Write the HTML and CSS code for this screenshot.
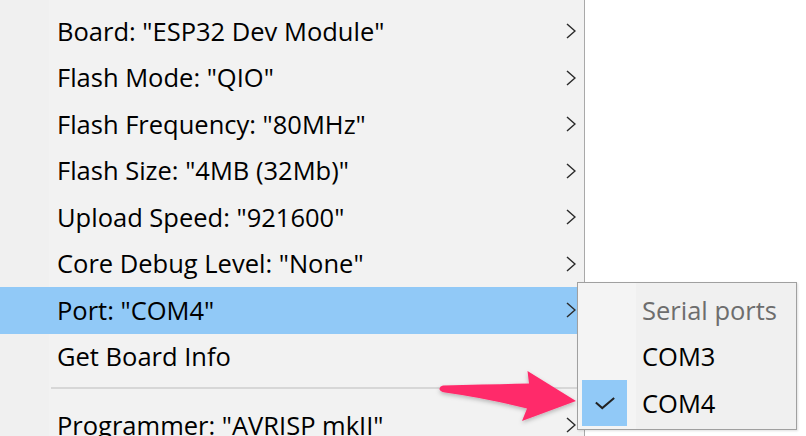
FILE: index.html
```html
<!DOCTYPE html>
<html>
<head>
<meta charset="utf-8">
<link rel="stylesheet" href="styles.css">
</head>
<body>
<div class="screen">
  <div class="menu">
    <div class="item"><span class="label">Board: "ESP32 Dev Module"</span><svg class="chev" viewBox="0 0 10 16"><path d="M1 1 L9 8 L1 15"/></svg></div>
    <div class="item"><span class="label">Flash Mode: "QIO"</span><svg class="chev" viewBox="0 0 10 16"><path d="M1 1 L9 8 L1 15"/></svg></div>
    <div class="item"><span class="label">Flash Frequency: "80MHz"</span><svg class="chev" viewBox="0 0 10 16"><path d="M1 1 L9 8 L1 15"/></svg></div>
    <div class="item"><span class="label">Flash Size: "4MB (32Mb)"</span><svg class="chev" viewBox="0 0 10 16"><path d="M1 1 L9 8 L1 15"/></svg></div>
    <div class="item"><span class="label">Upload Speed: "921600"</span><svg class="chev" viewBox="0 0 10 16"><path d="M1 1 L9 8 L1 15"/></svg></div>
    <div class="item"><span class="label">Core Debug Level: "None"</span><svg class="chev" viewBox="0 0 10 16"><path d="M1 1 L9 8 L1 15"/></svg></div>
    <div class="item active"><span class="label">Port: "COM4"</span><svg class="chev" viewBox="0 0 10 16"><path d="M1 1 L9 8 L1 15"/></svg></div>
    <div class="item"><span class="label">Get Board Info</span></div>
    <div class="sep"></div>
    <div class="item"><span class="label">Programmer: "AVRISP mkII"</span><svg class="chev" viewBox="0 0 10 16"><path d="M1 1 L9 8 L1 15"/></svg></div>
  </div>

  <div class="submenu">
    <div class="sub-item header"><span class="check"></span><span class="sub-label">Serial ports</span></div>
    <div class="sub-item"><span class="check"></span><span class="sub-label">COM3</span></div>
    <div class="sub-item"><span class="check on"><svg viewBox="0 0 24 16"><path d="M2 7 L9 13 L22 2"/></svg></span><span class="sub-label">COM4</span></div>
  </div>

  <svg class="arrow" viewBox="0 0 806 436" width="806" height="436">
    <defs>
      <filter id="sh" x="-20%" y="-50%" width="140%" height="200%">
        <feDropShadow dx="0" dy="2" stdDeviation="2" flood-color="#000" flood-opacity="0.25"/>
      </filter>
    </defs>
    <path filter="url(#sh)" fill="#ff2b6b" d="M443 385.5 Q 490 384.5 529 383.5 L 527.5 371 L 576 401 L 522 421 L 527 408.5 Q 485 398 445 392.5 Q 439 391 439.5 388.5 Q 440 386 443 385.5 Z"/>
  </svg>
</div>
</body>
</html>
```

FILE: styles.css
```css
html, body {
  margin: 0;
  padding: 0;
  background: #ffffff;
}

.screen {
  position: relative;
  width: 806px;
  height: 436px;
  overflow: hidden;
  font-family: "Open Sans", "Noto Sans", "DejaVu Sans", sans-serif;
  font-size: 25.5px;
  color: #000;
}

.menu {
  width: 585px;
  height: 436px;
  box-sizing: border-box;
  background: linear-gradient(to right, #f0f0f0 0, #f0f0f0 49px, #f2f2f2 49px);
  border-right: 1px solid #a9a9a9;
  padding-top: 8px;
  display: flex;
  flex-direction: column;
}

.item {
  height: 46.5px;
  flex: none;
  display: flex;
  align-items: center;
  padding-left: 57px;
  padding-right: 8px;
}

.item.active {
  background: #91c9f7;
}

.label {
  flex: 1;
  white-space: nowrap;
  line-height: 1;
}

.chev {
  width: 10px;
  height: 16px;
  fill: none;
  stroke: #2b2b2b;
  stroke-width: 1.5;
}

.sep {
  flex: none;
  height: 2px;
  margin: 7px 0 13px 51px;
  background: #d7d7d7;
}

.submenu {
  position: absolute;
  left: 577px;
  top: 282px;
  width: 220px;
  box-sizing: border-box;
  border: 1px solid #a0a0a0;
  background: linear-gradient(to right, #f4f4f4 0, #f4f4f4 58px, #f0f0f0 58px);
  padding: 4px 0 2px 0;
  box-shadow: 1px 1px 2px rgba(0, 0, 0, 0.12);
}

.sub-item {
  height: 46.5px;
  display: flex;
  align-items: center;
}

.check {
  width: 45px;
  height: 46px;
  margin-left: 4px;
  margin-right: 15px;
  display: flex;
  align-items: center;
  justify-content: center;
}

.check.on {
  background: #91c9f7;
}

.check svg {
  width: 22px;
  height: 15px;
  fill: none;
  stroke: #222;
  stroke-width: 2.2;
}

.sub-label {
  line-height: 1;
  white-space: nowrap;
}

.header .sub-label {
  color: #6d6d6d;
}

.arrow {
  position: absolute;
  left: 0;
  top: 0;
  pointer-events: none;
}
```
